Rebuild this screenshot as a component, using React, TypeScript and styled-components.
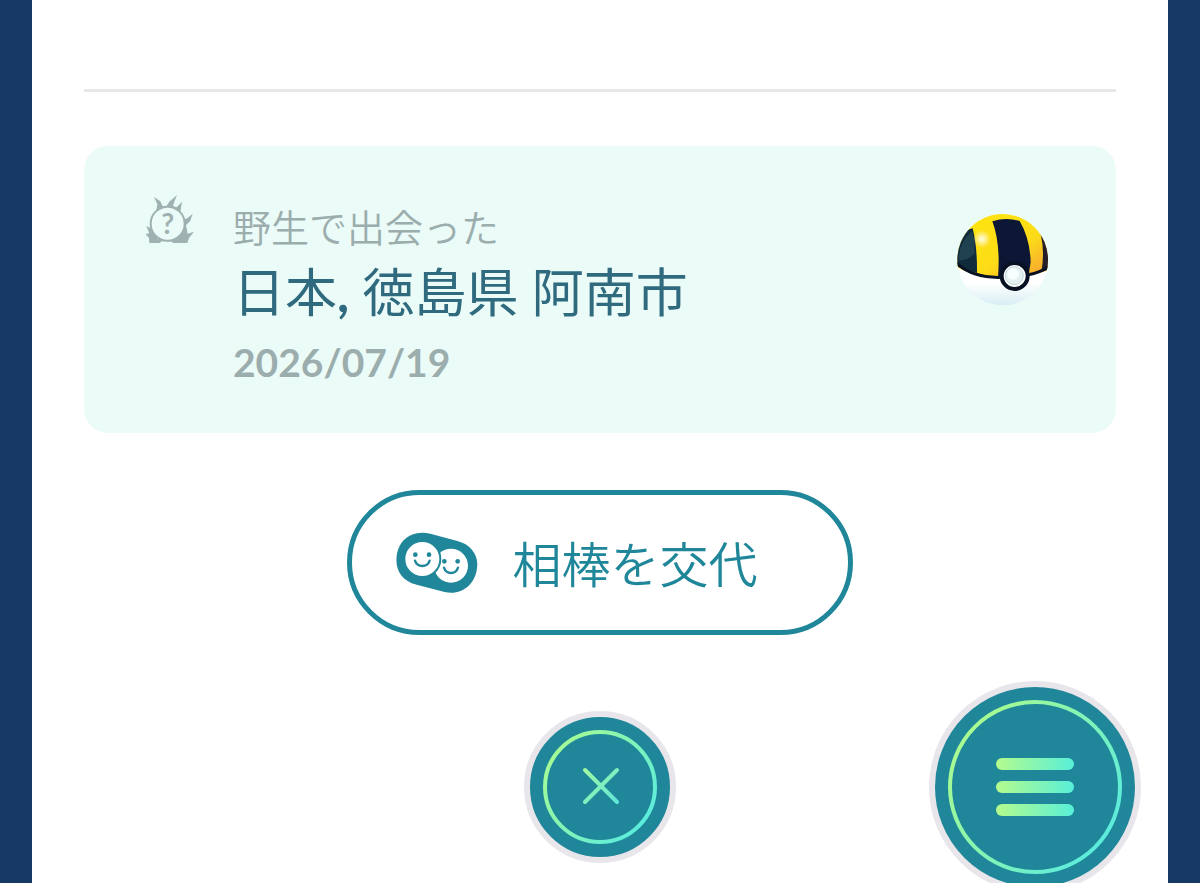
import React from "react";
import styled, { createGlobalStyle } from "styled-components";

const teal = "#1f8799";

const GlobalStyle = createGlobalStyle`
  *, *::before, *::after { box-sizing: border-box; }
  body {
    margin: 0;
    background: #153962;
    font-family: Lato, "Noto Sans CJK JP", sans-serif;
  }
`;

const Screen = styled.main`
  display: flex;
  flex-direction: column;
  height: 100vh;
  margin: 0 32px;
  padding: 89px 52px 0;
  overflow: hidden;
  background: #fff;
`;

const Divider = styled.hr`
  width: 100%;
  height: 3px;
  margin: 0 0 54px;
  border: 0;
  flex: none;
  background: #e6e7e8;
`;

const Card = styled.section`
  display: flex;
  align-items: flex-start;
  flex: none;
  padding: 49px 66px 41px 61px;
  border-radius: 24px;
  background: #ebfbf7;
`;

const Details = styled.div`
  flex: 1;
  min-width: 0;
  margin-left: 38px;
  padding-top: 5px;
`;

const Caption = styled.p`
  margin: 0;
  font-size: 38px;
  line-height: 52px;
  font-weight: 350;
  font-family: "Noto Sans CJK JP", sans-serif;
  color: #9badad;
`;

const Place = styled.h2`
  margin: 0;
  font-size: 52px;
  line-height: 80px;
  font-weight: 400;
  color: #2f6a7f;
`;

const Comma = styled.span`
  font-weight: 700;
`;

const MetDate = styled.time`
  display: block;
  font-size: 39px;
  line-height: 60px;
  font-weight: 700;
  color: #9badad;
`;

const BallSlot = styled.div`
  display: flex;
  align-self: center;
  padding-bottom: 68px;
`;

const SwapButton = styled.button`
  display: flex;
  align-items: center;
  align-self: center;
  flex: none;
  gap: 34px;
  height: 145px;
  margin: 57px 0 46px;
  padding: 0 90px 0 44px;
  border: 5px solid ${teal};
  border-radius: 73px;
  background: #fff;
  color: ${teal};
  font-family: "Noto Sans CJK JP", sans-serif;
  font-size: 49px;
  font-weight: 350;
  line-height: 72px;
  cursor: pointer;
`;

const SwapLabel = styled.span`
  padding-bottom: 2px;
`;

const Actions = styled.nav`
  display: grid;
  grid-template-columns: 1fr auto 1fr;
  align-items: center;
  flex: none;
  margin-right: -25px;
  margin-left: -25px;
`;

const RoundButton = styled.button<{ $size: number; $end?: boolean }>`
  display: flex;
  grid-column: ${(p) => (p.$end ? 3 : 2)};
  justify-self: ${(p) => (p.$end ? "end" : "center")};
  width: ${(p) => p.$size}px;
  height: ${(p) => p.$size}px;
  padding: 0;
  border: 6px solid #e8e6ea;
  border-radius: 50%;
  background: ${teal};
  cursor: pointer;
  svg { flex: 1; }
`;

const WildIcon = () => (
  <svg width="50" height="50" viewBox="45 45 150 150" aria-hidden="true">
    <g fill="#9fb1b1">
      <path d="M58 189 57 174 47 162 58 160 49 138 66 146 82 176 84 189Z" />
      <path d="M78 98 82 73 72 51 91 64 99 80 108 80 119 64 141 46 134 62 129 78 140 82 156 65 152 91 146 102 110 90Z" />
      <path d="M158 119 172 115 188 101 181 122 168 136 171 151 173 161 192 155 177 174 172 189 133 189 145 173Z" />
      <path d="M82 176 142 176 140 189 130 189 123 184 94 184 90 189 82 189Z" />
    </g>
    <circle cx="113" cy="131" r="51" fill="#ebfbf7" stroke="#9fb1b1" strokeWidth="6" />
    <text x="113" y="161" textAnchor="middle" fontFamily="Lato, sans-serif" fontSize="84" fontWeight="700" fill="#9fb1b1">?</text>
  </svg>
);

const BallIcon = () => (
  <svg width="95" height="95" viewBox="45 35 285 285" role="img" aria-label="ハイパーボール">
    <defs>
      <clipPath id="ball"><ellipse cx="188" cy="178" rx="136" ry="137" /></clipPath>
      <clipPath id="dome"><path d="M40 30H335V205C310 218 280 223 266 225L184 232C130 231 85 223 40 193Z" /></clipPath>
      <linearGradient id="gold" x1="0" y1="0" x2="1" y2="1">
        <stop offset="0" stopColor="#ffe60c" /><stop offset=".6" stopColor="#fcdc18" /><stop offset="1" stopColor="#f59a37" />
      </linearGradient>
      <linearGradient id="base" x1="0" y1="0" x2="0" y2="1">
        <stop offset=".75" stopColor="#fff" /><stop offset="1" stopColor="#d5ecf4" />
      </linearGradient>
      <radialGradient id="shine">
        <stop offset="0" stopColor="#fff" stopOpacity=".9" /><stop offset="1" stopColor="#fff" stopOpacity="0" />
      </radialGradient>
    </defs>
    <g clipPath="url(#ball)">
      <rect x="45" y="35" width="285" height="285" fill="url(#base)" />
      <g clipPath="url(#dome)">
        <rect x="45" y="35" width="285" height="200" fill="url(#gold)" />
        <path d="M157 63Q198 49 239 62Q270 115 272 185L265 230H174Q182 130 157 63Z" fill="#0c1736" />
        <path d="M98 84Q112 140 111 218L40 195V100Z" fill="#102b3c" />
        <path d="M96 92Q106 125 103 160Q84 181 56 180Q57 125 96 92Z" fill="#1f4150" />
        <path d="M302 101Q315 155 304 215L335 205V110Z" fill="#251d28" />
        <circle cx="126" cy="116" r="27" fill="url(#shine)" />
      </g>
      <path d="M47 187Q98 234 184 231L265 223Q302 216 326 199" fill="none" stroke="#071124" strokeWidth="9" />
    </g>
    <circle cx="224" cy="227" r="39" fill="#fff" stroke="#071124" strokeWidth="12" />
    <circle cx="223" cy="226" r="27" fill="#e4f1f3" stroke="#c3d8dd" strokeWidth="3" />
    <circle cx="219" cy="221" r="17" fill="#f8ffff" />
  </svg>
);

const BuddyIcon = () => (
  <svg width="82" height="62" viewBox="48 37 246 186" aria-hidden="true">
    <path d="M111 41Q128 37 151 42L232 64C273 74 297 108 291 145C286 196 242 229 194 217L110 195C61 184 43 145 51 102Q62 51 111 41Z" fill={teal} />
    <circle cx="213" cy="138" r="51" fill="#fff" />
    <circle cx="127" cy="118" r="54" fill="#fff" stroke={teal} strokeWidth="6" />
    <g fill={teal}>
      <circle cx="106" cy="105" r="7" /><circle cx="147" cy="105" r="7" />
      <circle cx="193" cy="125" r="7" /><circle cx="233" cy="125" r="7" />
    </g>
    <path d="M105 123Q110 139 127 139T149 123M192 144Q197 160 213 160T234 144" fill="none" stroke={teal} strokeWidth="7" strokeLinecap="round" />
  </svg>
);

const CloseIcon = () => (
  <svg viewBox="0 0 140 140" aria-hidden="true">
    <defs>
      <linearGradient id="closeRing" gradientUnits="userSpaceOnUse" x1="25" y1="35" x2="115" y2="105">
        <stop offset="0" stopColor="#a4fb96" /><stop offset="1" stopColor="#5cecdc" />
      </linearGradient>
      <linearGradient id="closeMark" gradientUnits="userSpaceOnUse" x1="54" y1="54" x2="88" y2="88">
        <stop offset="0" stopColor="#a0f9a2" /><stop offset="1" stopColor="#5de6dc" />
      </linearGradient>
    </defs>
    <circle cx="70" cy="70" r="55" fill="none" stroke="url(#closeRing)" strokeWidth="4" />
    <path d="M55 53 87 85M87 53 55 85" stroke="url(#closeMark)" strokeWidth="4" strokeLinecap="round" />
  </svg>
);

const MenuIcon = () => (
  <svg viewBox="0 0 200 200" aria-hidden="true">
    <defs>
      <linearGradient id="menuRing" gradientUnits="userSpaceOnUse" x1="30" y1="50" x2="170" y2="150">
        <stop offset="0" stopColor="#a8fb91" /><stop offset="1" stopColor="#5cecdc" />
      </linearGradient>
      <linearGradient id="menuBars" gradientUnits="userSpaceOnUse" x1="61" y1="0" x2="139" y2="0">
        <stop offset="0" stopColor="#b5fb8d" /><stop offset="1" stopColor="#58efd8" />
      </linearGradient>
    </defs>
    <circle cx="100" cy="100" r="85" fill="none" stroke="url(#menuRing)" strokeWidth="4" />
    <g fill="url(#menuBars)">
      <rect x="61" y="71" width="78" height="12" rx="6" />
      <rect x="61" y="94" width="78" height="12" rx="6" />
      <rect x="61" y="117" width="78" height="12" rx="6" />
    </g>
  </svg>
);

export default function App() {
  return (
    <>
      <GlobalStyle />
      <Screen>
        <Divider />
        <Card>
          <WildIcon />
          <Details>
            <Caption>野生で出会った</Caption>
            <Place>日本<Comma>,</Comma> 徳島県 阿南市</Place>
            <MetDate dateTime="2026-07-19">2026/07/19</MetDate>
          </Details>
          <BallSlot><BallIcon /></BallSlot>
        </Card>
        <SwapButton type="button">
          <BuddyIcon />
          <SwapLabel>相棒を交代</SwapLabel>
        </SwapButton>
        <Actions>
          <RoundButton type="button" aria-label="閉じる" $size={152}><CloseIcon /></RoundButton>
          <RoundButton type="button" aria-label="メニュー" $size={212} $end><MenuIcon /></RoundButton>
        </Actions>
      </Screen>
    </>
  );
}
